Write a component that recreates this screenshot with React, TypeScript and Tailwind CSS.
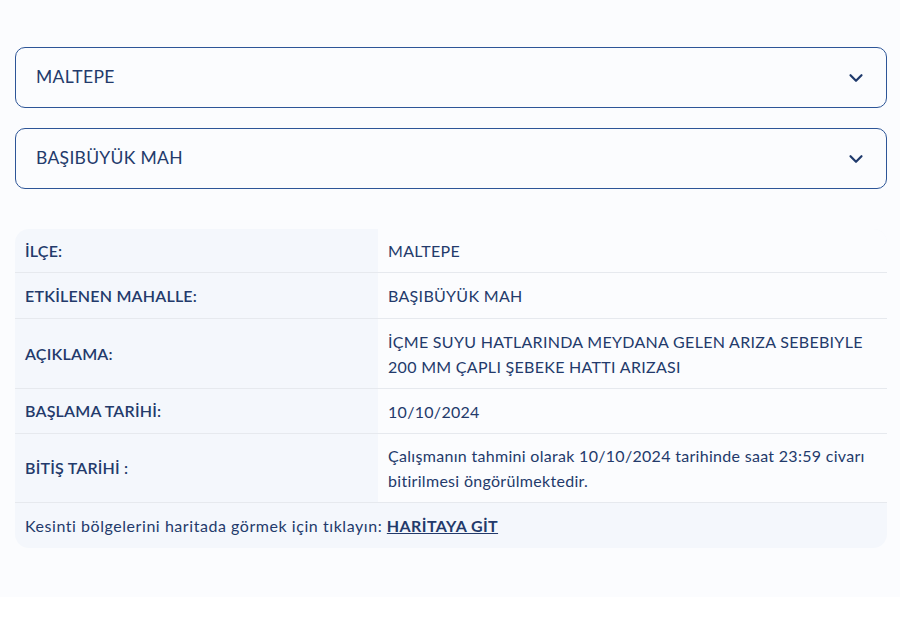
import { ChevronDown } from "lucide-react";

const rows = [
  { label: "İLÇE:", value: "MALTEPE", h: "h-[44px]" },
  { label: "ETKİLENEN MAHALLE:", value: "BAŞIBÜYÜK MAH", h: "h-[46px]" },
  {
    label: "AÇIKLAMA:",
    value: "İÇME SUYU HATLARINDA MEYDANA GELEN ARIZA SEBEBIYLE 200 MM ÇAPLI ŞEBEKE HATTI ARIZASI",
    h: "h-[70px]",
  },
  { label: "BAŞLAMA TARİHİ:", value: "10/10/2024", h: "h-[45px]" },
  {
    label: "BİTİŞ TARİHİ :",
    value: "Çalışmanın tahmini olarak 10/10/2024 tarihinde saat 23:59 civarı bitirilmesi öngörülmektedir.",
    h: "h-[69px]",
  },
];

function Select({ value }: { value: string }) {
  return (
    <div className="h-[61px] border border-[#2d5597] rounded-[10px] bg-[#fbfcfe] flex items-center justify-between pl-[20px] pr-[19px]">
      <span className="text-[17.5px] tracking-[0.3px] text-[#233a6b]">{value}</span>
      <ChevronDown className="w-[22px] h-[22px] text-[#1f3a6c]" strokeWidth={2.4} />
    </div>
  );
}

export default function App() {
  return (
    <div className="bg-white min-h-[634px]" style={{ fontFamily: "Lato, 'Noto Sans', sans-serif" }}>
      <div className="bg-[#fbfcfe] h-[597px] px-[15px] pt-[47px] pr-[13px]">
        <div className="flex flex-col gap-[20px]">
          <Select value="MALTEPE" />
          <Select value="BAŞIBÜYÜK MAH" />
        </div>

        <div className="mt-[40px] rounded-[14px] overflow-hidden bg-[#f4f7fc]">
          {rows.map((r) => (
            <div key={r.label} className={`flex border-b border-[#e6e9ee] ${r.h}`}>
              <div className="w-[363px] shrink-0 flex items-center pl-[10px] text-[16px] tracking-[0.2px] font-semibold text-[#233a6b]">
                {r.label}
              </div>
              <div className="flex-1 bg-[#fbfcfe] flex items-center pl-[10px] pr-[10px] text-[16px] tracking-[0.3px] leading-[25px] text-[#233a6b]">
                {r.value}
              </div>
            </div>
          ))}
          <div className="h-[45px] flex items-center pl-[10px] text-[16px] tracking-[0.55px] text-[#233a6b]">
            <span>Kesinti bölgelerini haritada görmek için tıklayın:&nbsp;</span>
            <a href="#" className="font-bold underline tracking-[0.4px] text-[#233a6b]">HARİTAYA GİT</a>
          </div>
        </div>
      </div>
    </div>
  );
}
